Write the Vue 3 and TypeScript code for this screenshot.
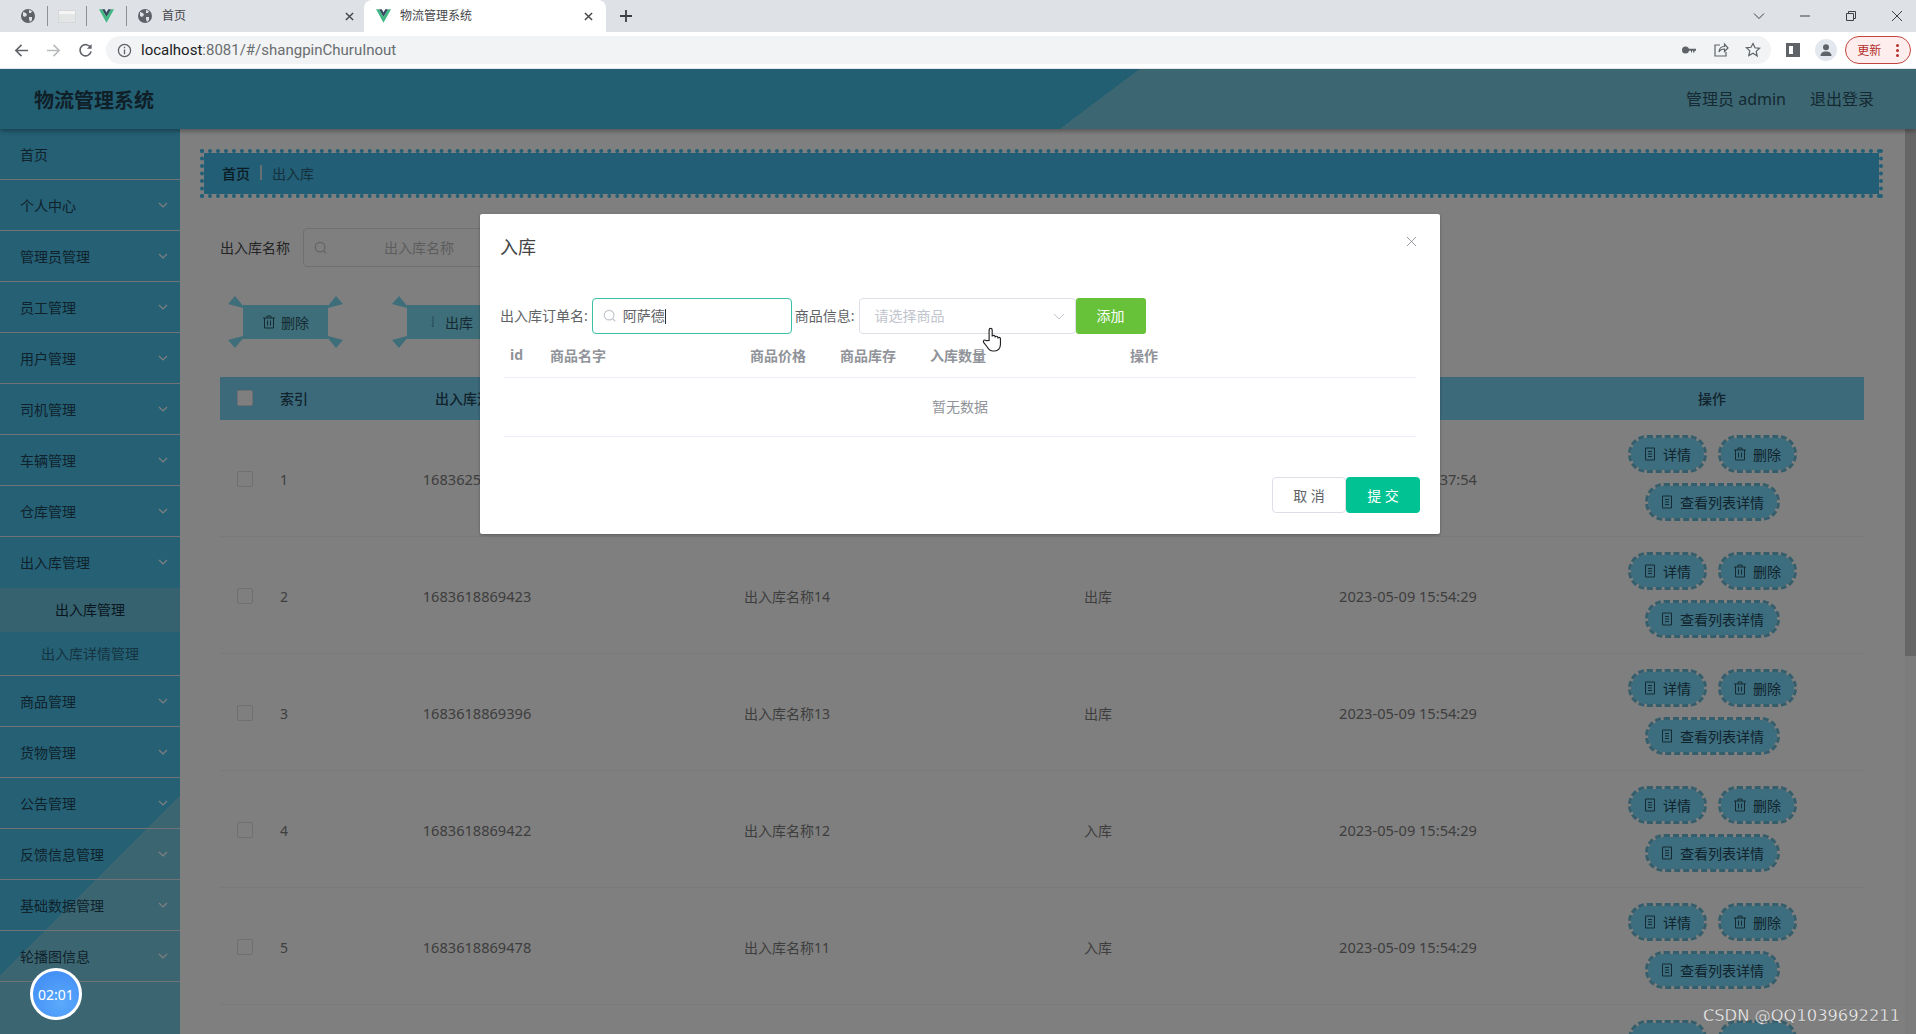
<script setup lang="ts">
import { ref } from 'vue';

interface MenuItem {
    name: string,
    arrow: boolean,
    children?: { name: string, active?: boolean }[],
}

interface Row {
    index: number,
    code: string,
    name: string,
    type: string,
    time: string,
}

const menus: MenuItem[] = [
    { name: '首页', arrow: false },
    { name: '个人中心', arrow: true },
    { name: '管理员管理', arrow: true },
    { name: '员工管理', arrow: true },
    { name: '用户管理', arrow: true },
    { name: '司机管理', arrow: true },
    { name: '车辆管理', arrow: true },
    { name: '仓库管理', arrow: true },
    {
        name: '出入库管理',
        arrow: true,
        children: [{ name: '出入库管理', active: true }, { name: '出入库详情管理' }],
    },
    { name: '商品管理', arrow: true },
    { name: '货物管理', arrow: true },
    { name: '公告管理', arrow: true },
    { name: '反馈信息管理', arrow: true },
    { name: '基础数据管理', arrow: true },
    { name: '轮播图信息', arrow: true },
];

const rows: Row[] = [
    { index: 1, code: '1683625074123', name: '出入库名称15', type: '入库', time: '2023-05-09 17:37:54' },
    { index: 2, code: '1683618869423', name: '出入库名称14', type: '出库', time: '2023-05-09 15:54:29' },
    { index: 3, code: '1683618869396', name: '出入库名称13', type: '出库', time: '2023-05-09 15:54:29' },
    { index: 4, code: '1683618869422', name: '出入库名称12', type: '入库', time: '2023-05-09 15:54:29' },
    { index: 5, code: '1683618869478', name: '出入库名称11', type: '入库', time: '2023-05-09 15:54:29' },
];

const goodsColumns = [
    { label: 'id', width: 40 },
    { label: '商品名字', width: 200 },
    { label: '商品价格', width: 90 },
    { label: '商品库存', width: 90 },
    { label: '入库数量', width: 200 },
    { label: '操作', width: 60 },
];

const orderName = ref('阿萨德');
</script>

<template>
    <div class="browser">
        <div class="tabstrip">
            <svg class="globe first" viewBox="0 0 16 16"><circle cx="8" cy="8" r="7" fill="#5f6368" /><path d="M3 4l3 1 1 2-2 2-2-1zM9 2l3 1-1 2-2 0zM9 9l3 0 0 3-2 2-1-3z" fill="#dee1e6" /></svg>
            <i class="tab-sep"></i>
            <span class="doc-icon"></span>
            <i class="tab-sep"></i>
            <svg class="vue-logo" viewBox="0 0 20 18"><path d="M0 0h4l6 10 6-10h4L10 18z" fill="#41b883" /><path d="M4 0h3.600L10 4.200 12.400 0H16l-6 10z" fill="#35495e" /></svg>
            <i class="tab-sep"></i>
            <div class="tab">
                <svg class="globe" viewBox="0 0 16 16"><circle cx="8" cy="8" r="7" fill="#5f6368" /><path d="M3 4l3 1 1 2-2 2-2-1zM9 2l3 1-1 2-2 0zM9 9l3 0 0 3-2 2-1-3z" fill="#dee1e6" /></svg>
                <span class="tab-title">首页</span>
                <svg class="tab-close" viewBox="0 0 10 10"><path d="M1 1l8 8M9 1l-8 8" /></svg>
            </div>
            <div class="tab active">
                <svg class="vue-logo" viewBox="0 0 20 18"><path d="M0 0h4l6 10 6-10h4L10 18z" fill="#41b883" /><path d="M4 0h3.600L10 4.200 12.400 0H16l-6 10z" fill="#35495e" /></svg>
                <span class="tab-title">物流管理系统</span>
                <svg class="tab-close" viewBox="0 0 10 10"><path d="M1 1l8 8M9 1l-8 8" /></svg>
            </div>
            <svg class="new-tab" viewBox="0 0 12 12"><path d="M6 0v12M0 6h12" /></svg>
            <div class="win-controls">
                <svg viewBox="0 0 12 12"><path d="M1 3.500l5 5 5-5" /></svg>
                <svg viewBox="0 0 12 12"><path d="M1 6h10" /></svg>
                <svg viewBox="0 0 12 12"><path d="M1.500 3.500h7v7h-7zM3.500 3.500v-2h7v7h-2" /></svg>
                <svg viewBox="0 0 12 12"><path d="M1 1l10 10M11 1L1 11" /></svg>
            </div>
        </div>

        <div class="toolbar">
            <svg class="nav" viewBox="0 0 16 16"><path d="M15 8H2M8 2L2 8l6 6" /></svg>
            <svg class="nav off" viewBox="0 0 16 16"><path d="M1 8h13M8 2l6 6-6 6" /></svg>
            <svg class="nav" viewBox="0 0 16 16"><path d="M13.500 5A6 6 0 1 0 14 9" /><path class="solid" d="M14.500 1v5h-5z" /></svg>
            <div class="urlbar">
                <svg class="info" viewBox="0 0 16 16"><circle cx="8" cy="8" r="6.500" /><path d="M8 7v5M8 4v1.500" /></svg>
                <span class="url"><span class="host">localhost</span>:8081/#/shangpinChuruInout</span>
                <div class="url-actions">
                    <svg viewBox="0 0 16 16"><circle class="solid" cx="4.500" cy="8" r="3.500" /><path class="solid" d="M7 6.800h8v2h-1.500v1.800h-1.500V8.800h-1v1.800H10V8.800H7z" /></svg>
                    <svg viewBox="0 0 16 16"><path d="M7 3H2v11h11v-4M6 10c0-4 3-5.500 5.500-5.500V2L15 6l-3.500 3.500V7C9 7 7 8 6 10z" /></svg>
                    <svg viewBox="0 0 16 16"><path d="M8 1.500l2 4.300 4.600.5-3.400 3.100 1 4.600L8 11.200l-4.200 2.300 1-4.600-3.400-3.100 4.600-.5z" /></svg>
                </div>
            </div>
            <span class="panel-icon"></span>
            <span class="avatar">
                <svg viewBox="0 0 16 16"><circle cx="8" cy="5.200" r="3" fill="#5f6368" /><path d="M2.500 14c0-3.200 2.500-4.500 5.500-4.500s5.500 1.300 5.500 4.500z" fill="#5f6368" /></svg>
            </span>
            <div class="update-pill">
                <span>更新</span>
                <span class="dots"><i></i><i></i><i></i></span>
            </div>
        </div>

        <div class="app">
            <header class="top">
                <span class="brand">物流管理系统</span>
                <div class="top-right">
                    <span>管理员 admin</span>
                    <span>退出登录</span>
                </div>
            </header>

            <div class="body">
                <aside class="side">
                    <template v-for="menu in menus" :key="menu.name">
                        <div class="menu-item" :class="{ open: menu.children }">
                            <span>{{ menu.name }}</span>
                            <svg v-if="menu.arrow" class="chevron" viewBox="0 0 10 6"><path d="M1 1l4 4 4-4" /></svg>
                        </div>
                        <div v-if="menu.children" class="submenu">
                            <div
                                v-for="child in menu.children"
                                :key="child.name"
                                class="sub-item"
                                :class="{ active: child.active }"
                            >{{ child.name }}</div>
                        </div>
                    </template>
                </aside>

                <main class="main">
                    <div class="content">
                        <div class="crumb">
                            <span class="crumb-home">首页</span>
                            <i class="crumb-sep"></i>
                            <span class="crumb-cur">出入库</span>
                        </div>

                        <div class="search">
                            <span class="search-label">出入库名称</span>
                            <div class="search-input">
                                <svg class="search-icon" viewBox="0 0 16 16"><circle cx="7" cy="7" r="5.500" /><path d="M11 11l3 3" /></svg>
                                <span>出入库名称</span>
                            </div>
                        </div>

                        <div class="actions">
                            <button class="act-btn">
                                <svg class="corners" viewBox="0 0 117 66"><polygon points="1,15 8,7 17,18 16,19" /><polygon points="116,15 109,7 100,18 101,19" /><polygon points="1,51 8,59 17,48 16,47" /><polygon points="116,51 109,59 100,48 101,47" /></svg>
                                <svg class="btn-icon" viewBox="0 0 14 14"><path d="M1 3h12M5 3V1h4v2M2.500 3v10h9V3M5.500 5.500v5M8.500 5.500v5" /></svg>
                                删除
                            </button>
                            <button class="act-btn">
                                <svg class="corners" viewBox="0 0 117 66"><polygon points="1,15 8,7 17,18 16,19" /><polygon points="116,15 109,7 100,18 101,19" /><polygon points="1,51 8,59 17,48 16,47" /><polygon points="116,51 109,59 100,48 101,47" /></svg>
                                <svg class="btn-icon thin" viewBox="0 0 14 14"><path d="M7 1v11M5.500 10.500L7 12" /></svg>
                                出库
                            </button>
                        </div>

                        <div class="grid head">
                            <span class="check"><i class="box on"></i></span>
                            <span class="left">索引</span>
                            <span>出入库流水号</span>
                            <span>出入库名称</span>
                            <span>出入库类型</span>
                            <span>录入时间</span>
                            <span>操作</span>
                        </div>

                        <div v-for="row in rows" :key="row.index" class="grid row">
                            <span class="check"><i class="box"></i></span>
                            <span class="left">{{ row.index }}</span>
                            <span class="num">{{ row.code }}</span>
                            <span>{{ row.name }}</span>
                            <span>{{ row.type }}</span>
                            <span class="num">{{ row.time }}</span>
                            <div class="ops">
                                <button class="op-btn">
                                    <svg class="btn-icon" viewBox="0 0 14 14"><path d="M2.500 1h9v12h-9zM5 4.500h4M5 7h4M5 9.500h4" /></svg>
                                    详情
                                </button>
                                <button class="op-btn">
                                    <svg class="btn-icon" viewBox="0 0 14 14"><path d="M1 3h12M5 3V1h4v2M2.500 3v10h9V3M5.500 5.500v5M8.500 5.500v5" /></svg>
                                    删除
                                </button>
                                <button class="op-btn wide">
                                    <svg class="btn-icon" viewBox="0 0 14 14"><path d="M2.500 1h9v12h-9zM5 4.500h4M5 7h4M5 9.500h4" /></svg>
                                    查看列表详情
                                </button>
                            </div>
                        </div>

                        <div class="ops peek">
                            <span class="op-btn"></span>
                            <span class="op-btn"></span>
                        </div>
                    </div>
                    <div class="scrollbar">
                        <div class="thumb"></div>
                    </div>
                </main>
            </div>

            <div class="mask">
                <div class="dialog">
                    <div class="dialog-head">
                        <span>入库</span>
                        <svg class="dialog-close" viewBox="0 0 12 12"><path d="M1 1l10 10M11 1L1 11" /></svg>
                    </div>
                    <div class="dialog-body">
                        <div class="form-row">
                            <label>出入库订单名:</label>
                            <div class="field focus">
                                <svg class="search-icon" viewBox="0 0 16 16"><circle cx="7" cy="7" r="5.500" /><path d="M11 11l3 3" /></svg>
                                <span class="value">{{ orderName }}</span>
                                <i class="caret"></i>
                            </div>
                            <label>商品信息:</label>
                            <div class="field select">
                                <span class="placeholder">请选择商品</span>
                                <svg class="select-arrow" viewBox="0 0 12 7"><path d="M1 1l5 5 5-5" /></svg>
                            </div>
                            <button class="add-btn">添加</button>
                        </div>
                        <div class="goods-head">
                            <span v-for="col in goodsColumns" :key="col.label" :style="{ width: col.width + 'px' }">{{ col.label }}</span>
                        </div>
                        <div class="goods-empty">暂无数据</div>
                    </div>
                    <div class="dialog-foot">
                        <button class="btn-cancel">取 消</button>
                        <button class="btn-submit">提 交</button>
                    </div>
                </div>
            </div>

            <div class="timer">02:01</div>
            <svg class="hand" viewBox="0 0 20 26">
                <path d="M7 14V3a1.600 1.600 0 0 1 3.200 0v7c0-1.800 3-1.800 3 0v1c0-1.800 2.900-1.800 2.900 0v1c0-1.600 2.700-1.600 2.700.2V18c0 4-2.500 7-6 7h-2c-3 0-4.500-2-6-4.500L1.300 16c-1-1.800 1.200-3.300 2.600-1.800z" />
            </svg>
            <span class="watermark">CSDN @QQ1039692211</span>
        </div>
    </div>
</template>

<style>
html, body {
    margin: 0;
    padding: 0;
    overflow: hidden;
}
</style>

<style scoped>
.browser {
    display: flex;
    flex-direction: column;
    width: 1916px;
    height: 1034px;
    overflow: hidden;
    font-family: "Noto Sans", "Noto Sans CJK SC", sans-serif;
    font-size: 14px;
}
button {
    font-family: inherit;
    cursor: pointer;
}
svg {
    fill: none;
    flex-shrink: 0;
}

/* browser chrome */
.tabstrip {
    display: flex;
    align-items: center;
    height: 32px;
    background: #dee1e6;
    flex-shrink: 0;
}
.globe {
    width: 16px;
    height: 16px;
}
.globe.first {
    margin-left: 20px;
}
.tab-sep {
    width: 1px;
    height: 20px;
    background: #8d9095;
}
.tabstrip > .tab-sep:nth-of-type(1) {
    margin-left: 11px;
}
.doc-icon {
    width: 18px;
    height: 13px;
    margin: 0 10px;
    background: linear-gradient(#f4f5f4 0 30%, #e3e6e4 30%);
    border: 1px solid #d5d7d8;
    box-sizing: border-box;
}
.vue-logo {
    width: 15px;
    height: 14px;
    margin: 0 12px;
}
.tab {
    display: flex;
    align-items: center;
    height: 32px;
    width: 237px;
    box-sizing: border-box;
    padding-left: 10px;
    color: #45474a;
    font-size: 12px;
}
.tab .tab-title {
    margin-left: 9px;
    padding-bottom: 2px;
}
.tab .tab-close {
    width: 9px;
    height: 9px;
    margin-left: auto;
    margin-right: 10px;
    stroke: #45474a;
    stroke-width: 1.600;
}
.tab.active {
    width: 242px;
    background: #fff;
    border-radius: 8px 8px 0 0;
    padding-left: 12px;
}
.tab.active .vue-logo {
    margin: 0;
}
.tab.active .tab-close {
    margin-right: 13px;
}
.new-tab {
    width: 12px;
    height: 12px;
    margin-left: 14px;
    stroke: #3c4043;
    stroke-width: 1.800;
}
.win-controls {
    display: flex;
    margin-left: auto;
    margin-right: 13px;
    gap: 34px;
}
.win-controls svg {
    width: 12px;
    height: 12px;
    stroke: #3c4043;
    stroke-width: 1;
}

.toolbar {
    display: flex;
    align-items: center;
    height: 37px;
    padding: 0 5px 0 14px;
    box-sizing: border-box;
    background: #fff;
    flex-shrink: 0;
    border-bottom: 1px solid #e3e5e8;
}
.nav {
    width: 15px;
    height: 15px;
    margin-right: 17px;
    stroke: #5f6368;
    stroke-width: 1.700;
}
.nav.off {
    stroke: #b8babd;
}
.solid {
    fill: #5f6368;
    stroke: none;
}
.urlbar {
    display: flex;
    align-items: center;
    width: 1669px;
    height: 28px;
    margin-left: -4px;
    padding: 0 4px 0 11px;
    box-sizing: border-box;
    background: #f1f3f4;
    border-radius: 14px;
}
.info {
    width: 15px;
    height: 15px;
    stroke: #5f6368;
    stroke-width: 1.400;
}
.url {
    margin-left: 9px;
    font-family: "Roboto", sans-serif;
    font-size: 15px;
    color: #6a6d70;
}
.host {
    color: #202124;
}
.url-actions {
    display: flex;
    gap: 16px;
    margin-left: auto;
    margin-right: 6px;
}
.url-actions svg {
    width: 16px;
    height: 16px;
    stroke: #5f6368;
    stroke-width: 1.200;
}
.panel-icon {
    width: 14px;
    height: 14px;
    margin-left: 15px;
    border: 3px solid #5f6368;
    border-right-width: 7px;
    box-sizing: border-box;
}
.avatar {
    display: flex;
    align-items: center;
    justify-content: center;
    width: 22px;
    height: 22px;
    margin-left: 15px;
    border-radius: 50%;
    background: #e3e7ee;
}
.avatar svg {
    width: 16px;
    height: 16px;
}
.update-pill {
    display: flex;
    align-items: center;
    width: 66px;
    height: 28px;
    margin-left: 8px;
    padding-left: 11px;
    box-sizing: border-box;
    border: 1px solid #c5443f;
    border-radius: 14px;
    background: #fdeeed;
    color: #b3302e;
    font-size: 12px;
}
.dots {
    display: flex;
    flex-direction: column;
    gap: 2px;
    margin-left: 15px;
}
.dots i {
    width: 3px;
    height: 3px;
    border-radius: 50%;
    background: #b3302e;
}

/* app */
.app {
    position: relative;
    flex: 1;
    display: flex;
    flex-direction: column;
    min-height: 0;
    overflow: hidden;
}
.top {
    position: relative;
    z-index: 2;
    display: flex;
    align-items: center;
    justify-content: space-between;
    height: 60px;
    flex-shrink: 0;
    padding: 0 42px 0 34px;
    box-sizing: border-box;
    background: linear-gradient(143deg, #46bfe6 0 57.100%, #78cce4 57.100%);
    box-shadow: 0 2px 5px rgba(0, 0, 0, 0.35);
}
.brand {
    font-size: 20px;
    font-weight: 700;
    color: #1e4050;
}
.top-right {
    display: flex;
    gap: 24px;
    padding-bottom: 2px;
    font-size: 16px;
    color: #2a5465;
}

.body {
    flex: 1;
    display: flex;
    min-height: 0;
}
.side {
    width: 180px;
    flex-shrink: 0;
    background: linear-gradient(135deg, #4ac0ea 0 78%, #76cae2 78%);
}
.menu-item {
    display: flex;
    align-items: center;
    justify-content: space-between;
    height: 51px;
    padding: 0 12px 1px 20px;
    box-sizing: border-box;
    border-bottom: 1px solid #dfe6ea;
    color: #204558;
    font-size: 14px;
}
.menu-item.open {
    border-bottom: none;
}
.chevron {
    width: 10px;
    height: 6px;
    stroke: #fff;
    stroke-width: 1.200;
}
.submenu {
    height: 88px;
    box-sizing: border-box;
    border-bottom: 1px solid #dfe6ea;
}
.sub-item {
    display: flex;
    align-items: center;
    justify-content: center;
    height: 44px;
    padding-bottom: 2px;
    box-sizing: border-box;
    color: #2a6880;
    font-size: 14px;
}
.sub-item.active {
    background: #6cc2de;
    color: #123040;
}

.main {
    flex: 1;
    display: flex;
    min-width: 0;
    background: #fff;
}
.content {
    flex: 1;
    min-width: 0;
    padding: 20px 41px 0 40px;
    box-sizing: border-box;
    overflow: hidden;
}
.crumb {
    display: flex;
    align-items: center;
    height: 49px;
    margin: 0 -19px 0 -20px;
    padding-left: 18px;
    padding-bottom: 2px;
    box-sizing: border-box;
    background: #44bdea;
    background-clip: padding-box;
    border: 4px dotted #44bdea;
    color: #204558;
}
.crumb-home {
    font-weight: 500;
    color: #183848;
}
.crumb-sep {
    width: 2px;
    height: 15px;
    margin: 0 10px;
    background: #d0dfe6;
}
.crumb-cur {
    color: #2a6078;
}
.search {
    display: flex;
    align-items: center;
    margin-top: 30px;
    height: 39px;
}
.search-label {
    color: #4a4a4a;
    font-size: 14px;
    width: 83px;
    padding-bottom: 2px;
}
.search-input {
    display: flex;
    align-items: center;
    width: 300px;
    height: 39px;
    box-sizing: border-box;
    padding-left: 10px;
    border: 1px solid #dcdfe6;
    border-radius: 4px;
    color: #bbb;
}
.search-input span {
    margin-left: 56px;
    padding-bottom: 2px;
}
.search-icon {
    width: 14px;
    height: 14px;
    stroke: #c0c4cc;
    stroke-width: 1.300;
}
.actions {
    display: flex;
    gap: 79px;
    margin-top: 38px;
    padding-left: 23px;
}
.act-btn {
    position: relative;
    display: flex;
    align-items: center;
    justify-content: center;
    gap: 5px;
    width: 85px;
    height: 34px;
    padding: 0;
    border: none;
    background: #7cdcf2;
    color: #2a5465;
    font-size: 14px;
}
.corners {
    position: absolute;
    left: -16px;
    top: -16px;
    width: 117px;
    height: 66px;
    fill: #7cdcf2;
}
.btn-icon {
    width: 14px;
    height: 14px;
    stroke: #2a5465;
    stroke-width: 1;
}
.btn-icon.thin {
    stroke: #4a90a8;
}
.grid {
    display: grid;
    grid-template-columns: 50px 50px 314px 306px 316px 304px 304px;
    align-items: center;
    text-align: center;
}
.left {
    text-align: left;
    padding-left: 10px;
}
.head {
    height: 43px;
    margin-top: 38px;
    padding-bottom: 2px;
    box-sizing: border-box;
    background: #78d4f6;
    color: #234658;
    font-weight: 500;
}
.row {
    height: 117px;
    padding-top: 2px;
    border-bottom: 1px solid #f2f2f2;
    box-sizing: border-box;
    color: #7c7c7c;
}
.num {
    font-size: 14.600px;
}
.check {
    display: flex;
    justify-content: center;
}
.box {
    width: 14px;
    height: 14px;
    border: 1px solid #dcdfe6;
    border-radius: 2px;
}
.box.on {
    background: #fff;
}
.ops {
    display: flex;
    flex-wrap: wrap;
    justify-content: center;
    gap: 10px 11px;
    padding: 0 60px;
    margin-bottom: 2px;
}
.ops.peek {
    width: 304px;
    margin: 15px 0 0 1340px;
    box-sizing: border-box;
}
.op-btn {
    display: flex;
    align-items: center;
    justify-content: center;
    gap: 6px;
    width: 79px;
    height: 38px;
    box-sizing: border-box;
    padding: 0;
    border: 3px dashed #68bcd8;
    border-radius: 19px;
    background: #78dcfe;
    background-clip: padding-box;
    color: #234658;
    font-size: 14px;
}
.op-btn.wide {
    width: 135px;
}

.scrollbar {
    width: 11px;
    flex-shrink: 0;
    background: #f8f8f8;
}
.thumb {
    height: 527px;
    background: #cdcdcd;
}

/* dialog */
.mask {
    position: absolute;
    inset: 0;
    background: rgba(0, 0, 0, 0.5);
    z-index: 10;
}
.dialog {
    width: 960px;
    height: 320px;
    margin: 145px 0 0 480px;
    display: flex;
    flex-direction: column;
    box-sizing: border-box;
    background: #fff;
    border-radius: 2px;
    box-shadow: 0 1px 3px rgba(0, 0, 0, 0.3);
}
.dialog-head {
    position: relative;
    padding: 20px 20px 10px;
    color: #444;
    font-size: 18px;
    line-height: 26px;
}
.dialog-close {
    position: absolute;
    right: 23px;
    top: 22px;
    width: 11px;
    height: 11px;
    stroke: #909399;
    stroke-width: 1;
}
.dialog-body {
    padding: 28px 20px 0;
    flex: 1;
}
.form-row {
    display: flex;
    align-items: center;
    height: 36px;
    color: #606266;
}
.form-row label {
    font-size: 14px;
    white-space: nowrap;
    padding-bottom: 2px;
}
.field {
    display: flex;
    align-items: center;
    height: 36px;
    box-sizing: border-box;
    border: 1px solid #dcdfe6;
    border-radius: 4px;
    padding-left: 10px;
}
.field.focus {
    width: 200px;
    margin: 0 3px 0 4px;
    border-color: #3bbfa3;
}
.field.select {
    width: 217px;
    margin-left: 4px;
    padding-left: 15px;
    justify-content: space-between;
    padding-right: 10px;
}
.value {
    margin-left: 6px;
    padding-bottom: 2px;
    color: #606266;
}
.caret {
    width: 1px;
    height: 15px;
    background: #303133;
}
.placeholder {
    color: #c0c4cc;
    padding-bottom: 2px;
}
.select-arrow {
    width: 12px;
    height: 7px;
    stroke: #c0c4cc;
    stroke-width: 1;
}
.add-btn {
    width: 70px;
    height: 36px;
    padding: 0 0 2px;
    border: none;
    border-radius: 3px;
    background: #67c23a;
    color: #fff;
    font-size: 14px;
}
.goods-head {
    display: flex;
    align-items: center;
    margin-left: 4px;
    margin-right: 4px;
    padding: 0 0 2px 6px;
    height: 41px;
    border-bottom: 1px solid #ebeef5;
    color: #909399;
    font-weight: 700;
}
.goods-empty {
    display: flex;
    align-items: center;
    justify-content: center;
    height: 59px;
    padding-bottom: 2px;
    box-sizing: border-box;
    margin: 0 4px;
    border-bottom: 1px solid #ebeef5;
    color: #909399;
}
.dialog-foot {
    display: flex;
    justify-content: flex-end;
    padding: 0 20px 21px;
}
.btn-cancel, .btn-submit {
    width: 74px;
    height: 36px;
    padding: 0;
    border-radius: 4px;
    font-size: 14px;
}
.btn-cancel {
    background: #fff;
    border: 1px solid #dcdfe6;
    color: #606266;
}
.btn-submit {
    background: #00c292;
    border: none;
    color: #fff;
}

.timer {
    position: absolute;
    left: 30px;
    top: 899px;
    display: flex;
    align-items: center;
    justify-content: center;
    width: 52px;
    height: 52px;
    box-sizing: border-box;
    border: 3px solid #fff;
    border-radius: 50%;
    background: radial-gradient(circle at 60% 70%, #5aaafc, #3d87f3);
    color: #fff;
    font-size: 14px;
    z-index: 20;
}
.hand {
    position: absolute;
    left: 982px;
    top: 258px;
    width: 20px;
    height: 25px;
    fill: #fff;
    stroke: #222;
    stroke-width: 1.200;
    z-index: 20;
}
.watermark {
    position: absolute;
    right: 16px;
    bottom: 9px;
    font-family: "DejaVu Sans", sans-serif;
    font-size: 16.300px;
    color: #f4f4f4;
    -webkit-text-stroke: 0.300px #555;
    z-index: 20;
}
</style>
